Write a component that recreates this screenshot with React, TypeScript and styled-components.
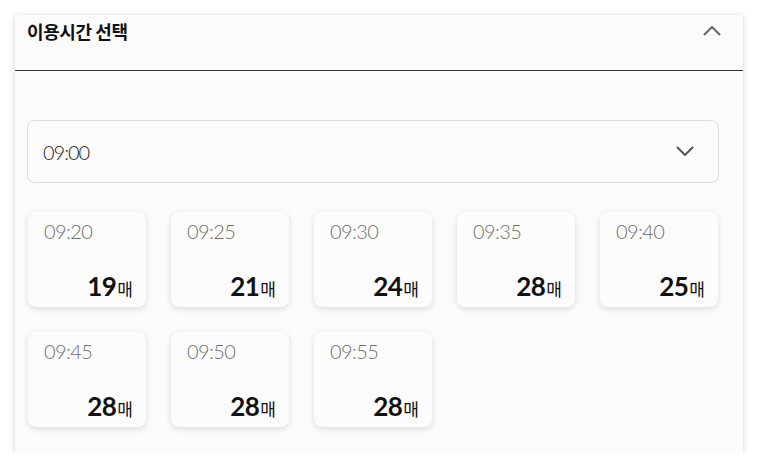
import styled, { createGlobalStyle } from 'styled-components'

const GlobalStyle = createGlobalStyle`
  body {
    margin: 0;
    background: #ffffff;
    font-family: Lato, "Noto Sans CJK KR", sans-serif;
  }
`

const Page = styled.div`
  padding: 15px 15px 0 15px;
  width: 728px;
`

const Panel = styled.section`
  background: #fbfbfb;
  box-shadow: 0 1px 6px rgba(0, 0, 0, 0.18);
  padding-bottom: 26px;
`

const Header = styled.header`
  height: 56px;
  border-bottom: 1px solid #333;
  display: flex;
  align-items: flex-start;
  justify-content: space-between;
  padding: 6px 22px 0 12px;
  box-sizing: border-box;
`

const Title = styled.h2`
  margin: 0;
  font-family: "Noto Sans CJK KR", sans-serif;
  font-size: 18px;
  font-weight: 700;
  line-height: 20px;
  color: #111;
  letter-spacing: -0.4px;
`

const Body = styled.div`
  padding: 49px 24px 0 12px;
`

const SelectBox = styled.div`
  height: 63px;
  box-sizing: border-box;
  border: 1px solid #dcdcdc;
  border-radius: 8px;
  background: #fcfcfc;
  display: flex;
  align-items: center;
  justify-content: space-between;
  padding: 0 24px 0 15px;
  font-family: "Lato Light", Lato, sans-serif;
  font-weight: 300;
  font-size: 20px;
  color: #222;
  letter-spacing: -1px;
`

const Grid = styled.div`
  margin: 29px 0 0 1px;
  display: grid;
  grid-template-columns: repeat(5, 118px);
  column-gap: 25px;
  row-gap: 25px;
`

const Slot = styled.button`
  all: unset;
  height: 95px;
  box-sizing: border-box;
  border-radius: 8px;
  background: #fcfcfc;
  box-shadow: 0 2px 6px rgba(0, 0, 0, 0.13);
  padding: 7px 13px 5px 16px;
  display: flex;
  flex-direction: column;
  justify-content: space-between;
`

const SlotTime = styled.span`
  font-family: "Lato Light", Lato, sans-serif;
  font-weight: 300;
  font-size: 20px;
  color: #6f6f6f;
  letter-spacing: -0.6px;
`

const Count = styled.span`
  align-self: flex-end;
  display: flex;
  align-items: baseline;
  color: #111;
`

const Num = styled.span`
  font-family: Lato, sans-serif;
  font-weight: 700;
  font-size: 26px;
  letter-spacing: -0.5px;
`

const Unit = styled.span`
  font-family: "Noto Sans CJK KR", sans-serif;
  font-size: 17px;
  font-weight: 400;
  margin-left: 1px;
`

const HeaderIcon = styled.span`
  margin-top: 4px;
  display: flex;
`

const Chevron = ({ up, color }: { up?: boolean; color: string }) => (
  <svg width="18" height="11" viewBox="0 0 18 11" fill="none">
    <path
      d={up ? 'M1.5 9.5 L9 2 L16.5 9.5' : 'M1.5 1.5 L9 9 L16.5 1.5'}
      stroke={color}
      strokeWidth="2"
      strokeLinecap="round"
      strokeLinejoin="round"
    />
  </svg>
)

const slots = [
  { time: '09:20', count: 19 },
  { time: '09:25', count: 21 },
  { time: '09:30', count: 24 },
  { time: '09:35', count: 28 },
  { time: '09:40', count: 25 },
  { time: '09:45', count: 28 },
  { time: '09:50', count: 28 },
  { time: '09:55', count: 28 },
]

export default function App() {
  return (
    <>
      <GlobalStyle />
      <Page>
        <Panel>
          <Header>
            <Title>이용시간 선택</Title>
            <HeaderIcon>
              <Chevron up color="#666" />
            </HeaderIcon>
          </Header>
          <Body>
            <SelectBox>
              <span>09:00</span>
              <Chevron color="#555" />
            </SelectBox>
            <Grid>
              {slots.map((s) => (
                <Slot key={s.time}>
                  <SlotTime>{s.time}</SlotTime>
                  <Count>
                    <Num>{s.count}</Num>
                    <Unit>매</Unit>
                  </Count>
                </Slot>
              ))}
            </Grid>
          </Body>
        </Panel>
      </Page>
    </>
  )
}
